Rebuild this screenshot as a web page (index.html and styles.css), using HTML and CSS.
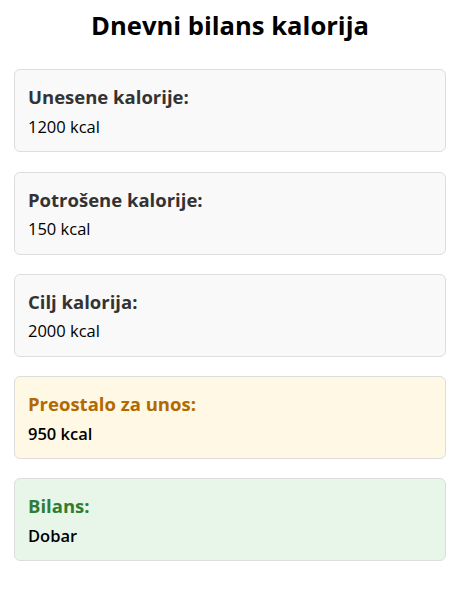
FILE: index.html
```html
<!DOCTYPE html>
<html lang="sr">
<head>
<meta charset="utf-8">
<title>Dnevni bilans kalorija</title>
<link rel="stylesheet" href="styles.css">
</head>
<body>
<main class="page">
  <h1 class="title">Dnevni bilans kalorija</h1>
  <section class="card">
    <h3 class="label">Unesene kalorije:</h3>
    <p class="value">1200 kcal</p>
  </section>
  <section class="card">
    <h3 class="label">Potrošene kalorije:</h3>
    <p class="value">150 kcal</p>
  </section>
  <section class="card">
    <h3 class="label">Cilj kalorija:</h3>
    <p class="value">2000 kcal</p>
  </section>
  <section class="card card-warn">
    <h3 class="label">Preostalo za unos:</h3>
    <p class="value">950 kcal</p>
  </section>
  <section class="card card-good">
    <h3 class="label">Bilans:</h3>
    <p class="value">Dobar</p>
  </section>
</main>
</body>
</html>
```
FILE: styles.css
```css
* { box-sizing: border-box; }
html, body { margin: 0; padding: 0; background: #fff; }
body {
  font-family: "Open Sans", "Noto Sans", sans-serif;
  color: #000;
}
.page {
  padding: 0 15px 0 14px;
  display: flex;
  flex-direction: column;
  gap: 19.25px;
}
.title {
  margin: 9px 0 7px;
  text-align: center;
  font-size: 25.6px;
  font-weight: 700;
  line-height: 34px;
}
.card {
  height: 83px;
  border: 1px solid #dddddd;
  border-radius: 6px;
  background: #f9f9f9;
  padding: 15px 13px 0;
}
.label {
  margin: 0;
  font-size: 18.5px;
  line-height: 24px;
  font-weight: 700;
  color: #333;
}
.value {
  margin: 7.5px 0 0;
  font-size: 16.5px;
  line-height: 20px;
}
.card-warn { background: #fff8e5; }
.card-warn .label { color: #b26a00; }
.card-warn .value { font-weight: 600; }
.card-good { background: #e8f5e9; }
.card-good .label { color: #2e7d32; }
.card-good .value { font-weight: 600; }
```
